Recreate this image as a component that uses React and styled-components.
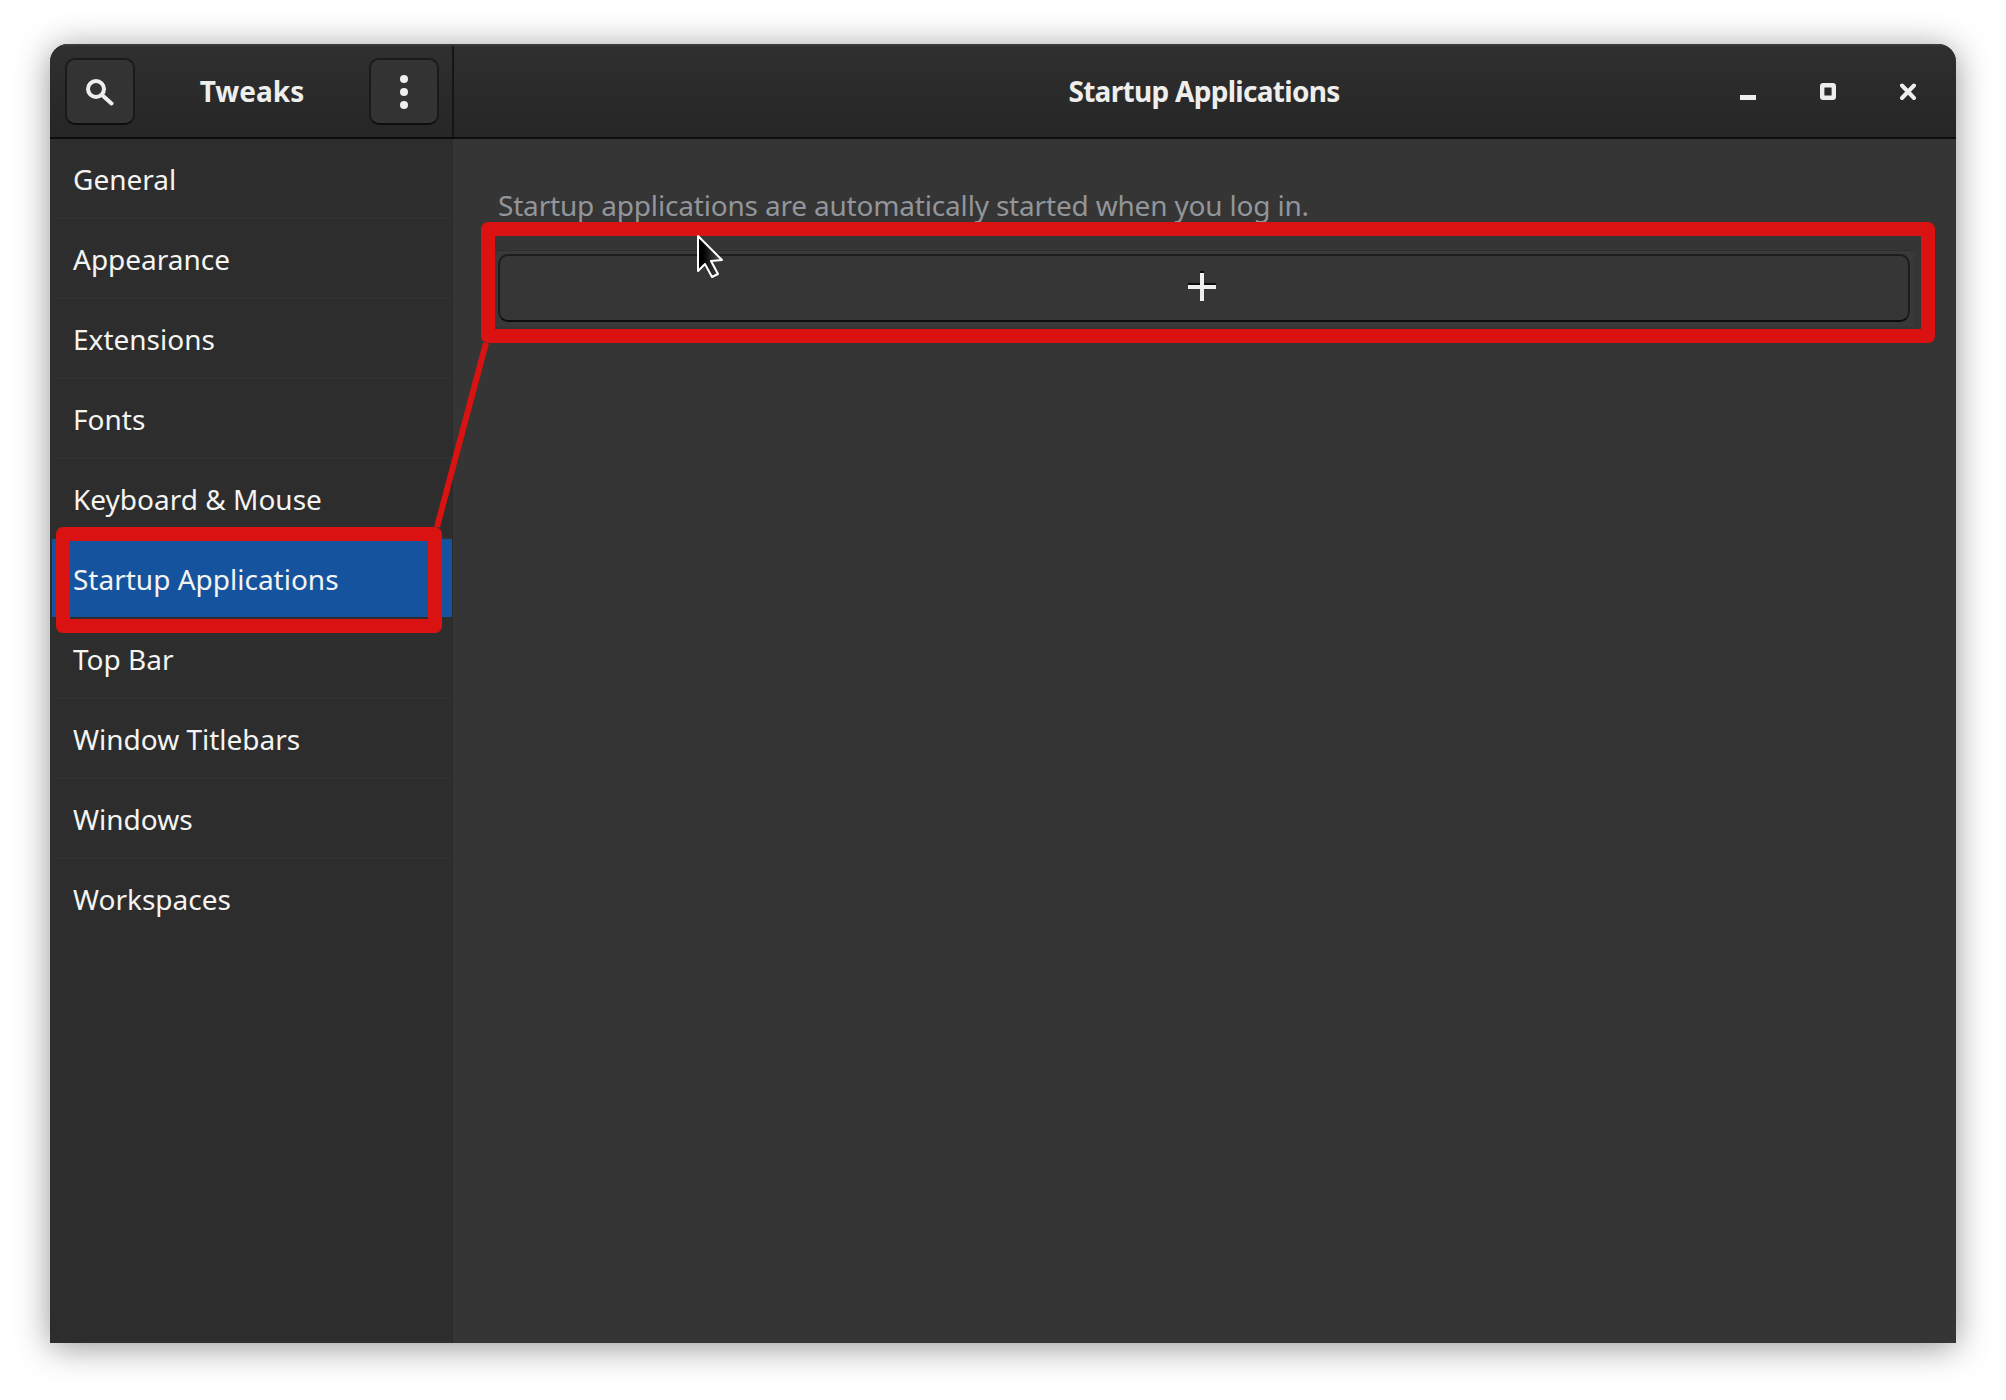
import styled, { createGlobalStyle } from 'styled-components'

const GlobalStyle = createGlobalStyle`
  html, body {
    margin: 0;
    background: #fff;
    font-family: "Noto Sans", "Open Sans", sans-serif;
  }
`

const Page = styled.div`
  width: 2006px;
  height: 1400px;
  padding: 44px 50px 56px;
  box-sizing: border-box;
`
const Window = styled.div`
  position: relative;
  width: 1906px;
  height: 1299px;
  display: flex;
  flex-direction: column;
  border-radius: 18px 18px 0 0;
  background: #353535;
  box-shadow: 0 4px 34px rgba(0, 0, 0, 0.42);
  overflow: hidden;
`
const HeaderBar = styled.header`
  height: 95px;
  flex: none;
  display: flex;
  box-sizing: border-box;
  padding: 0 2px;
  background: linear-gradient(#2f2f2f, #262626);
  border-top: 2px solid #3a3a3a;
  border-bottom: 2px solid #0d0d0d;
  color: #eeeeec;
`
const LeftHeader = styled.div`
  width: 402px;
  flex: none;
  display: flex;
  align-items: center;
  justify-content: space-between;
  padding: 0 13px;
  box-sizing: border-box;
  border-right: 2px solid #151515;
`
const RightHeader = styled.div`
  flex: 1;
  position: relative;
  display: flex;
  align-items: center;
  justify-content: flex-end;
  padding-right: 38px;
  gap: 64px;
`
const Title = styled.div`
  font-size: 28px;
  font-weight: 700;
  padding-bottom: 2px;
`
const CenteredTitle = styled(Title)`
  position: absolute;
  left: 0;
  right: 0;
  text-align: center;
  letter-spacing: -0.7px;
`
const HeaderButton = styled.button`
  width: 70px;
  height: 67px;
  display: flex;
  align-items: center;
  justify-content: center;
  padding: 0;
  border: 2px solid #1a1a1a;
  border-bottom-color: #0e0e0e;
  border-radius: 10px;
  background: #333333;
  color: #eeeeec;
`
const WindowControl = styled.svg`
  width: 16px;
  height: 18px;
  fill: #eeeeec;
  stroke: #eeeeec;
`
const Body = styled.div`
  flex: 1;
  display: flex;
  min-height: 0;
`
const Sidebar = styled.nav`
  width: 403px;
  flex: none;
  box-sizing: border-box;
  padding-left: 2px;
  background: #2d2d2d;
  border-right: 1px solid #2a2a2a;
`
const Row = styled.div`
  height: 80px;
  box-sizing: border-box;
  padding: 1px 0 0 21px;
  display: flex;
  align-items: center;
  font-size: 28px;
  color: #f4f4f2;
  border-bottom: 2px solid ${(p) => (p.$selected ? '#2d2d2d' : '#303030')};
  background: ${(p) => (p.$selected ? '#15539e' : 'transparent')};
  &:last-child {
    border-bottom-color: transparent;
  }
`
const Content = styled.main`
  flex: 1;
  padding: 47px 46px 0 45px;
  box-sizing: border-box;
`
const Description = styled.div`
  font-size: 28px;
  line-height: 38px;
  letter-spacing: -0.18px;
  color: #92959a;
`
const ListFrame = styled.div`
  margin: 26px -4px 0 -3px;
  padding: 3px 4px 4px 3px;
  background: #393939;
  border-top: 1px solid #2f2f2f;
`
const AddButton = styled.button`
  width: 100%;
  height: 68px;
  display: flex;
  align-items: center;
  justify-content: center;
  padding: 0 4px 4px 0;
  box-sizing: border-box;
  border: 2px solid #1c1c1c;
  border-bottom-color: #0c0c0c;
  border-radius: 10px;
  background: #363636;
`
const Callout = styled.div`
  position: absolute;
  left: ${(p) => p.$x}px;
  top: ${(p) => p.$y}px;
  width: ${(p) => p.$w}px;
  height: ${(p) => p.$h}px;
  box-sizing: border-box;
  border: 14px solid #db1212;
  border-radius: 7px;
`
const Overlay = styled.svg`
  position: absolute;
  left: ${(p) => p.$x}px;
  top: ${(p) => p.$y}px;
  overflow: visible;
`

const sections = [
  'General',
  'Appearance',
  'Extensions',
  'Fonts',
  'Keyboard & Mouse',
  'Startup Applications',
  'Top Bar',
  'Window Titlebars',
  'Windows',
  'Workspaces',
]

export default function App() {
  return (
    <Page>
      <GlobalStyle />
      <Window>
        <HeaderBar>
          <LeftHeader>
            <HeaderButton>
              <svg width="28" height="28" viewBox="0 0 28 28" fill="none" stroke="#eeeeec">
                <circle cx="10" cy="11" r="8" strokeWidth="4" />
                <path d="M16 17 L25.5 25.5" strokeWidth="4" strokeLinecap="round" />
              </svg>
            </HeaderButton>
            <Title>Tweaks</Title>
            <HeaderButton>
              <svg width="10" height="36" viewBox="0 0 10 36" fill="#eeeeec">
                <circle cx="5" cy="5" r="4" />
                <circle cx="5" cy="18" r="4" />
                <circle cx="5" cy="31" r="4" />
              </svg>
            </HeaderButton>
          </LeftHeader>
          <RightHeader>
            <CenteredTitle>Startup Applications</CenteredTitle>
            <WindowControl viewBox="0 0 16 18">
              <rect x="0" y="12" width="16" height="5" stroke="none" />
            </WindowControl>
            <WindowControl viewBox="0 0 16 18" style={{ fill: 'none' }}>
              <rect x="2.2" y="2.2" width="11.6" height="12.6" rx="1" strokeWidth="4.4" />
            </WindowControl>
            <WindowControl viewBox="0 0 16 18">
              <path d="M2 2.5 L14 15 M14 2.5 L2 15" strokeWidth="4" strokeLinecap="round" fill="none" />
            </WindowControl>
          </RightHeader>
        </HeaderBar>
        <Body>
          <Sidebar>
            {sections.map((name) => (
              <Row key={name} $selected={name === 'Startup Applications'}>
                {name}
              </Row>
            ))}
          </Sidebar>
          <Content>
            <Description>Startup applications are automatically started when you log in.</Description>
            <ListFrame>
              <AddButton>
                <svg width="28" height="30" viewBox="0 0 28 30" strokeWidth="4">
                  <path d="M14 0 V4 M0 14 H28" stroke="#0c0c0c" />
                  <path d="M14 2 V30 M0 16 H28" stroke="#eeeeec" />
                </svg>
              </AddButton>
            </ListFrame>
          </Content>
        </Body>
        <Callout $x={431} $y={178} $w={1454} $h={121} />
        <Callout $x={6} $y={483} $w={386} $h={106} />
        <Overlay $x={0} $y={0} width="1" height="1">
          <defs>
            <linearGradient id="cursorFill" x1="0" x2="1" y1="0" y2="0">
              <stop offset="0.2" stopColor="#000" />
              <stop offset="1" stopColor="#555" />
            </linearGradient>
          </defs>
          <path d="M436 299 L387 483" stroke="#db1212" strokeWidth="6" fill="none" />
          <path
            d="M648 192 L648 227 L655 220 L662 233 L668 230 L661 217 L672 216 Z"
            fill="url(#cursorFill)"
            stroke="#fff"
            strokeWidth="2"
            strokeLinejoin="round"
          />
        </Overlay>
      </Window>
    </Page>
  )
}
